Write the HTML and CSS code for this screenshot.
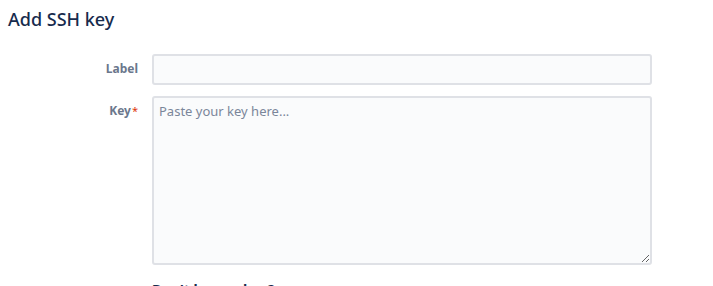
FILE: index.html
```html
<!DOCTYPE html>
<html lang="en">
<head>
  <meta charset="UTF-8" />
  <title>Add SSH key</title>
  <link rel="stylesheet" href="styles.css">
</head>
<body>
  <h1>Add SSH key</h1>
  <form class="key-form">
    <div class="field">
      <label for="label">Label</label>
      <input type="text" id="label" />
    </div>
    <div class="field">
      <label for="key">Key<span class="req">*</span></label>
      <textarea id="key" placeholder="Paste your key here..."></textarea>
    </div>
    <div class="field">
      <span></span>
      <h4 class="help">Don't have a key?</h4>
    </div>
  </form>
</body>
</html>
```

FILE: styles.css
```css
body {
  font-family: 'Noto Sans', 'Open Sans', sans-serif;
  margin: 0;
  padding: 6px 8px;
  background: #fff;
  color: #172b4d;
}
h1 {
  font-size: 18px;
  font-weight: 500;
  margin: 0 0 22px;
  line-height: 26px;
}
.key-form {
  display: flex;
  flex-direction: column;
  gap: 11px;
}
.field {
  display: grid;
  grid-template-columns: 130px 500px;
  column-gap: 14px;
  align-items: start;
}
label {
  text-align: right;
  font-size: 12px;
  font-weight: bold;
  color: #6b778c;
  line-height: 16px;
  padding-top: 7px;
}
.req {
  color: #de350b;
  font-weight: normal;
  vertical-align: top;
  font-size: 11px;
  margin-left: 1px;
}
input, textarea {
  box-sizing: border-box;
  width: 500px;
  border: 2px solid #dfe1e6;
  border-radius: 3px;
  background: #fafbfc;
  font-family: inherit;
  font-size: 13px;
  color: #172b4d;
  padding: 4px 5px;
  margin: 0;
}
input {
  height: 31px;
}
textarea {
  height: 169px;
  resize: vertical;
}
textarea::placeholder {
  color: #7a869a;
}
.help {
  margin: 4px 0 0;
  font-size: 14px;
  font-weight: bold;
  color: #172b4d;
}
```
